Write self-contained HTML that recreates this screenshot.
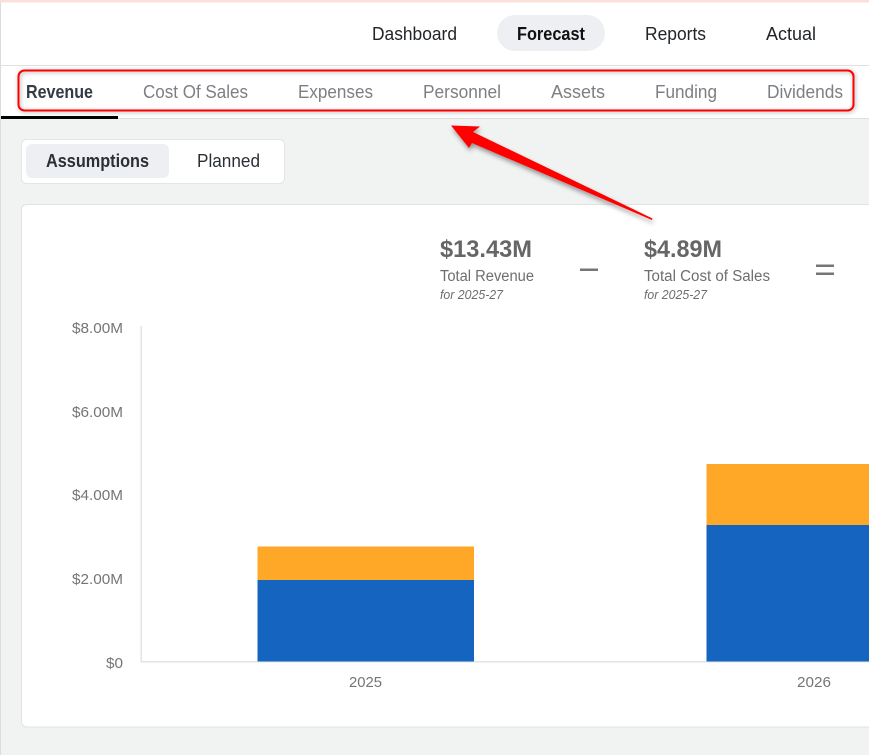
<!DOCTYPE html>
<html lang="en">
<head>
<meta charset="utf-8">
<title>Forecast</title>
<style>
html,body{margin:0;padding:0;width:869px;height:755px;overflow:hidden;background:#f1f3f3}
svg{display:block;position:absolute;left:0;top:0}
text{font-family:"Liberation Sans",sans-serif;dominant-baseline:alphabetic}
</style>
</head>
<body>
<svg width="869" height="755" viewBox="0 0 869 755" xmlns="http://www.w3.org/2000/svg">
<defs>
<filter id="s" x="-5%" y="-30%" width="110%" height="160%"><feDropShadow dx="1" dy="1" stdDeviation="2" flood-color="#000" flood-opacity=".35"/></filter>
<filter id="a" x="-10%" y="-20%" width="120%" height="140%"><feDropShadow dx="1" dy="3" stdDeviation="2.5" flood-color="#000" flood-opacity=".4"/></filter>
</defs>
<rect width="869" height="755" fill="#f1f3f3"/>
<rect x="0" y="2" width="869" height="116" fill="#fff"/>
<rect x="0" y="0" width="869" height="2.5" fill="#fbe0da"/>
<rect x="0" y="2" width="1" height="753" fill="#dcdcdc"/>
<rect x="1" y="65" width="868" height="1" fill="#e0e0e0"/>
<rect x="1" y="118" width="868" height="1" fill="#e0e0e0"/>
<rect x="1" y="116" width="117" height="3" fill="#000"/>

<rect x="497" y="15" width="108" height="36" rx="18" fill="#eeeff2"/>
<g font-size="18.5" fill="#212529">
<text x="372" y="40" textLength="85" lengthAdjust="spacingAndGlyphs">Dashboard</text>
<text x="517" y="40" textLength="68" lengthAdjust="spacingAndGlyphs" font-weight="700" fill="#111">Forecast</text>
<text x="645" y="40" textLength="61" lengthAdjust="spacingAndGlyphs">Reports</text>
<text x="766" y="40" textLength="50" lengthAdjust="spacingAndGlyphs">Actual</text>
</g>

<g font-size="18.5" fill="#7c7f83">
<text x="26" y="98" textLength="67" lengthAdjust="spacingAndGlyphs" font-weight="700" fill="#343a46">Revenue</text>
<text x="143" y="98" textLength="105" lengthAdjust="spacingAndGlyphs">Cost Of Sales</text>
<text x="298" y="98" textLength="75" lengthAdjust="spacingAndGlyphs">Expenses</text>
<text x="423" y="98" textLength="78" lengthAdjust="spacingAndGlyphs">Personnel</text>
<text x="551" y="98" textLength="54" lengthAdjust="spacingAndGlyphs">Assets</text>
<text x="655" y="98" textLength="62" lengthAdjust="spacingAndGlyphs">Funding</text>
<text x="767" y="98" textLength="76" lengthAdjust="spacingAndGlyphs">Dividends</text>
</g>
<rect x="18.5" y="70.5" width="835" height="40" rx="6" fill="none" stroke="#f00" stroke-width="2" filter="url(#s)"/>

<rect x="21.5" y="139.5" width="263" height="44" rx="5" fill="#fff" stroke="#e3e5e6"/>
<rect x="26" y="144" width="143" height="34" rx="6" fill="#eeeff2"/>
<text x="46" y="167" font-size="18.5" font-weight="700" fill="#2b2f36" textLength="103" lengthAdjust="spacingAndGlyphs">Assumptions</text>
<text x="197" y="167" font-size="18.5" fill="#2b2f36" textLength="63" lengthAdjust="spacingAndGlyphs">Planned</text>

<rect x="21.5" y="204.5" width="860" height="522.5" rx="5" fill="#fff" stroke="#e1e3e3"/>

<polygon points="451,125.5 480,126.5 473,132 652.5,218.5 652,220 472,143 469,148" fill="#f00" filter="url(#a)"/>

<text x="440" y="257" font-size="24.5" font-weight="700" fill="#666" textLength="92" lengthAdjust="spacingAndGlyphs">$13.43M</text>
<text x="440" y="281" font-size="15.5" fill="#6e6e6e" textLength="94" lengthAdjust="spacingAndGlyphs">Total Revenue</text>
<text x="440" y="299" font-size="13" font-style="italic" fill="#6e6e6e" textLength="63" lengthAdjust="spacingAndGlyphs">for 2025-27</text>
<rect x="580" y="268.5" width="18" height="2.5" fill="#757575"/>

<text x="644" y="257" font-size="24.5" font-weight="700" fill="#666" textLength="78" lengthAdjust="spacingAndGlyphs">$4.89M</text>
<text x="644" y="281" font-size="15.5" fill="#6e6e6e" textLength="126" lengthAdjust="spacingAndGlyphs">Total Cost of Sales</text>
<text x="644" y="299" font-size="13" font-style="italic" fill="#6e6e6e" textLength="63" lengthAdjust="spacingAndGlyphs">for 2025-27</text>
<rect x="816" y="264.5" width="18" height="2.5" fill="#757575"/>
<rect x="816" y="272.5" width="18" height="2.5" fill="#757575"/>

<g font-size="15" fill="#757575">
<text x="72" y="333" textLength="51" lengthAdjust="spacingAndGlyphs">$8.00M</text>
<text x="72" y="417" textLength="51" lengthAdjust="spacingAndGlyphs">$6.00M</text>
<text x="72" y="500" textLength="51" lengthAdjust="spacingAndGlyphs">$4.00M</text>
<text x="72" y="584" textLength="51" lengthAdjust="spacingAndGlyphs">$2.00M</text>
<text x="106" y="668" textLength="17" lengthAdjust="spacingAndGlyphs">$0</text>
<text x="349" y="687" textLength="33" lengthAdjust="spacingAndGlyphs">2025</text>
<text x="797" y="687" textLength="34" lengthAdjust="spacingAndGlyphs">2026</text>
</g>

<rect x="140.5" y="326" width="1.5" height="336" fill="#e3e3e3"/>
<rect x="140.5" y="661" width="729" height="1.5" fill="#e3e3e3"/>

<rect x="257.5" y="546.5" width="216.5" height="33.5" fill="#ffa726"/>
<rect x="257.5" y="580" width="216.5" height="81.5" fill="#1565c0"/>
<rect x="706.5" y="464" width="163" height="61" fill="#ffa726"/>
<rect x="706.5" y="525" width="163" height="136.5" fill="#1565c0"/>
</svg>
</body>
</html>
